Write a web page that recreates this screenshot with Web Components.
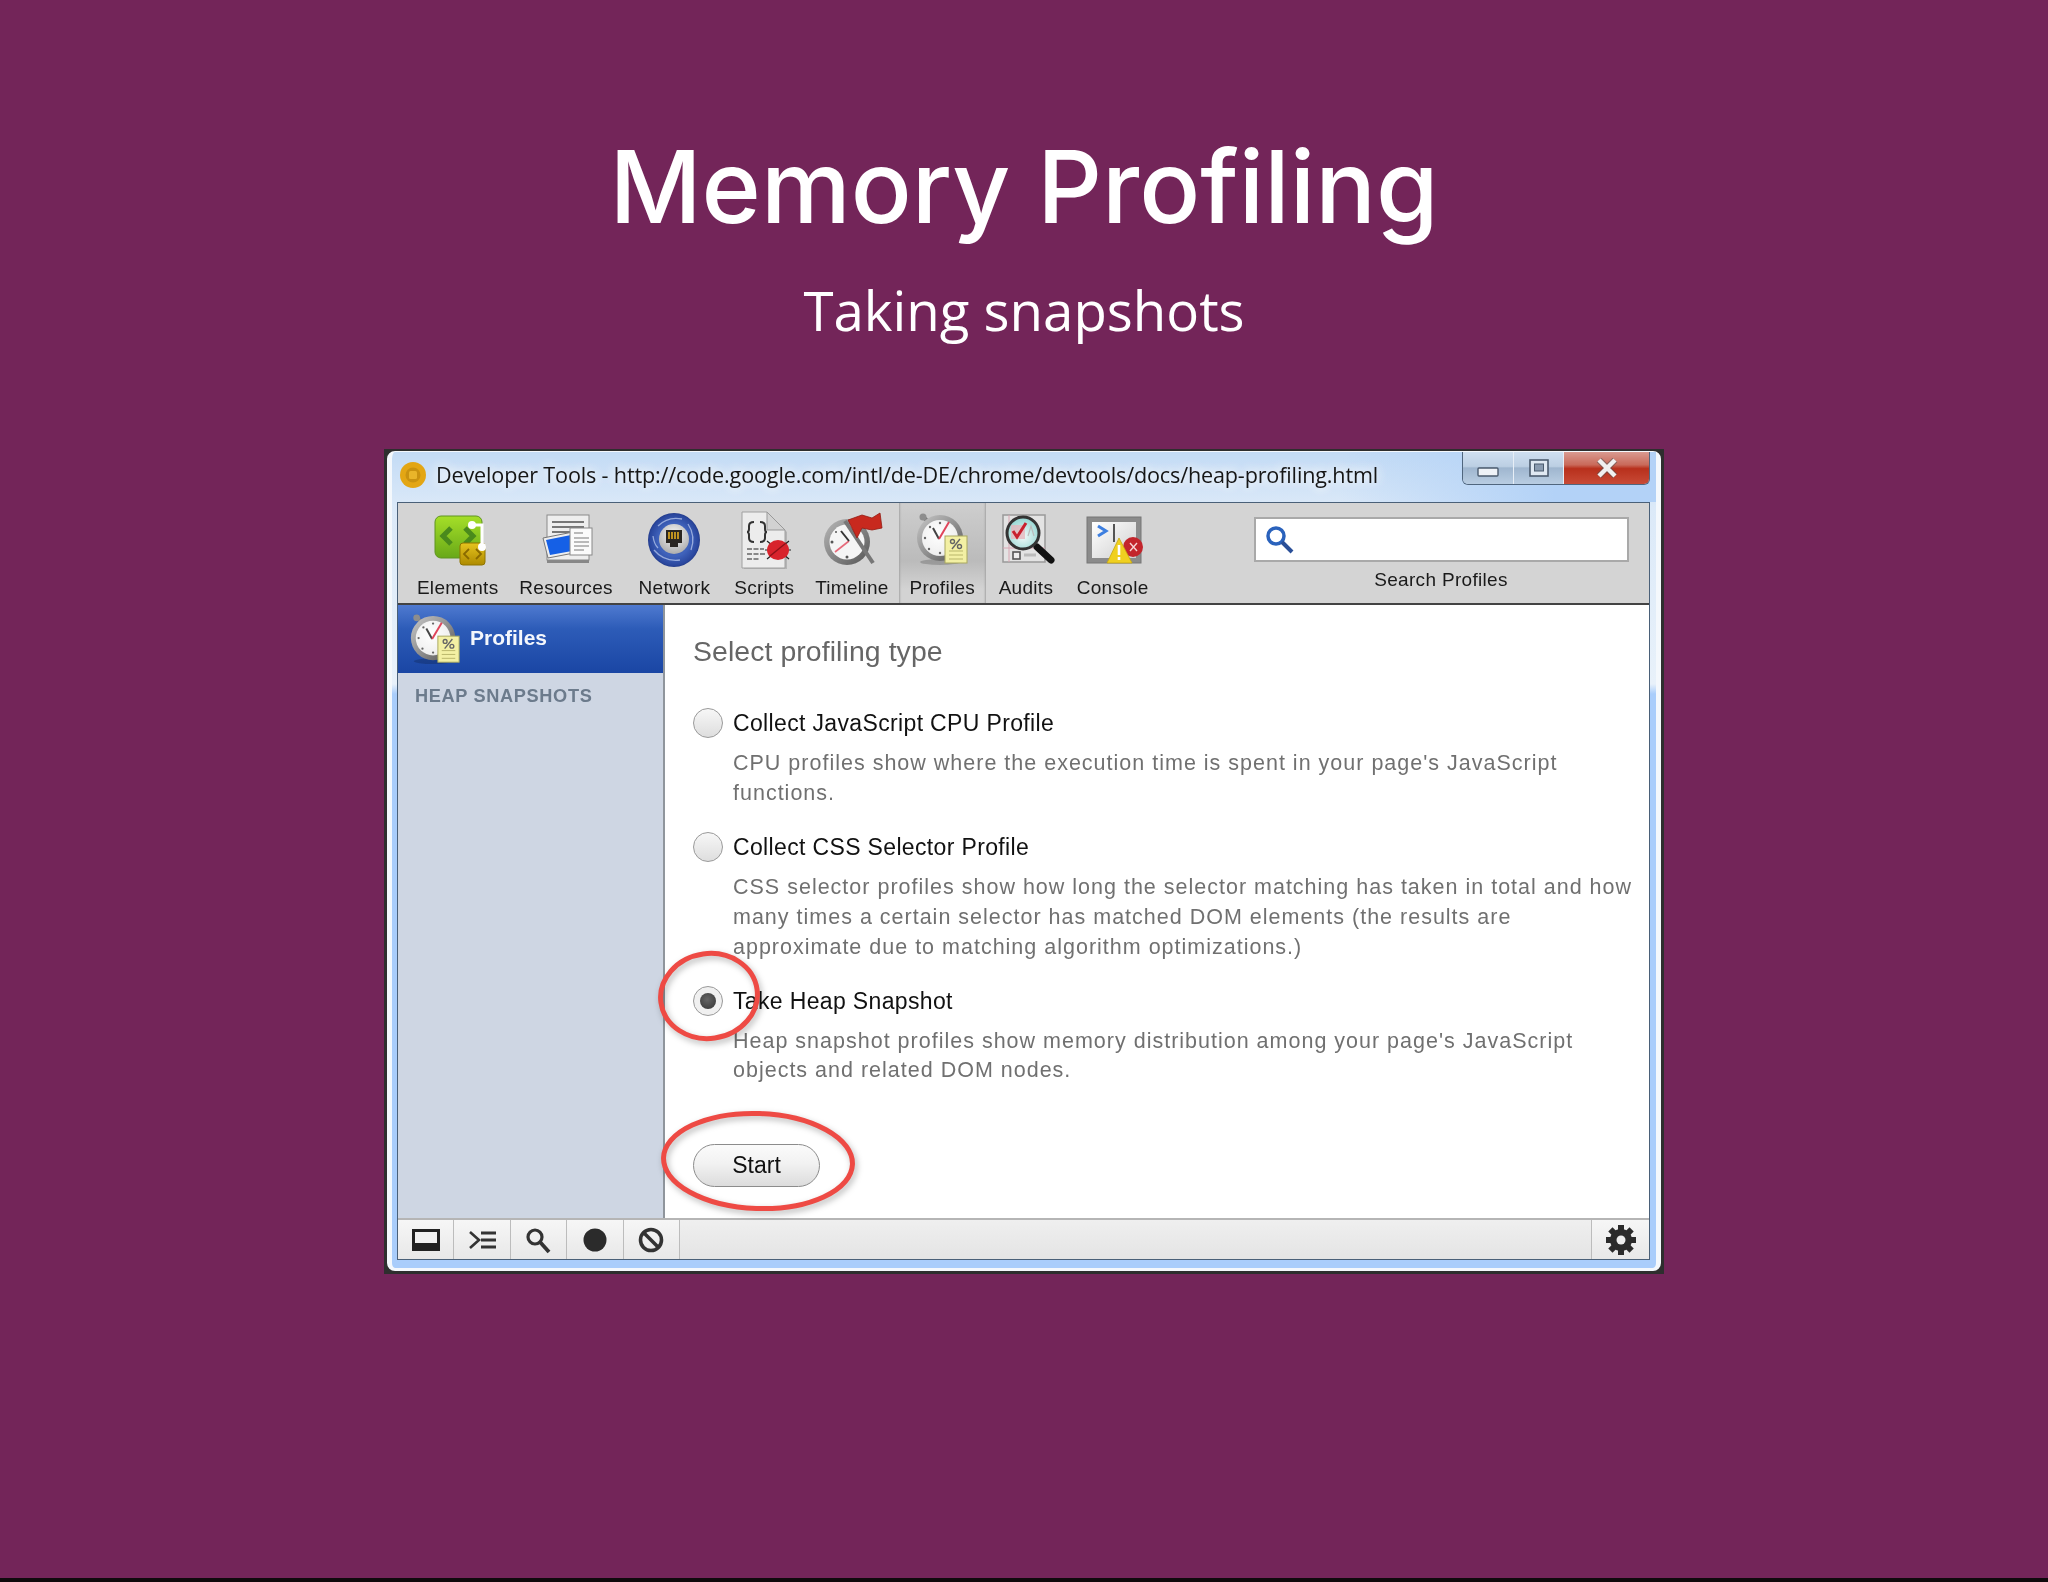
<!DOCTYPE html>
<html>
<head>
<meta charset="utf-8">
<title>Memory Profiling</title>
<style>
    html, body { margin: 0; padding: 0; background: #732559; }
</style>
</head>
<body>
<deck-slide>
    <span slot="title">Memory Profiling</span>
    <span slot="subtitle">Taking snapshots</span>
    <dt-window>
        <span slot="caption">Developer Tools - http://code.google.com/intl/de-DE/chrome/devtools/docs/heap-profiling.html</span>

        <dt-tool slot="tools" icon="elements">Elements</dt-tool>
        <dt-tool slot="tools" icon="resources">Resources</dt-tool>
        <dt-tool slot="tools" icon="network" style="margin-left: 5px">Network</dt-tool>
        <dt-tool slot="tools" icon="scripts" style="margin-left: 3px">Scripts</dt-tool>
        <dt-tool slot="tools" icon="timeline">Timeline</dt-tool>
        <dt-tool slot="tools" icon="profiles" selected>Profiles</dt-tool>
        <dt-tool slot="tools" icon="audits">Audits</dt-tool>
        <dt-tool slot="tools" icon="console">Console</dt-tool>

        <dt-sidebar slot="sidebar"></dt-sidebar>

        <profile-panel slot="panel">
            <profile-option>
                <span slot="label">Collect JavaScript CPU Profile</span>
                CPU profiles show where the execution time is spent in your page's JavaScript<br>functions.
            </profile-option>
            <profile-option>
                <span slot="label">Collect CSS Selector Profile</span>
                CSS selector profiles show how long the selector matching has taken in total and how<br>many times a certain selector has matched DOM elements (the results are<br>approximate due to matching algorithm optimizations.)
            </profile-option>
            <profile-option checked>
                <span slot="label">Take Heap Snapshot</span>
                Heap snapshot profiles show memory distribution among your page's JavaScript<br>objects and related DOM nodes.
            </profile-option>
        </profile-panel>

        <dt-status slot="status"></dt-status>
    </dt-window>
</deck-slide>

<script>
// --- icons ---------------------------------------------------------------
const stopwatch = /* html */`
    <defs>
        <linearGradient id="ring" x1="0" y1="0" x2="1" y2="1"><stop offset="0" stop-color="#c9c9c9"/><stop offset=".55" stop-color="#8b8b8b"/><stop offset="1" stop-color="#4f4f4f"/></linearGradient>
        <radialGradient id="face" cx=".45" cy=".4" r=".7"><stop offset="0" stop-color="#ffffff"/><stop offset=".8" stop-color="#efefef"/><stop offset="1" stop-color="#bdbdbd"/></radialGradient>
    </defs>
    <path d="M11 5 L18 11" stroke="#777" stroke-width="4"/>
    <circle cx="11" cy="5" r="3.5" fill="#8d8d8d"/>
    <ellipse cx="28" cy="50" rx="20" ry="3" fill="#000" opacity=".18"/>
    <circle cx="28" cy="26" r="23" fill="url(#ring)"/>
    <circle cx="28" cy="26" r="18" fill="url(#face)"/>
    <g fill="#666"><circle cx="28" cy="11" r="1.2"/><circle cx="13" cy="26" r="1.2"/><circle cx="18" cy="15" r="1.2"/><circle cx="17" cy="37" r="1.2"/><circle cx="28" cy="41" r="1.2"/></g>
    <path d="M21 16 L27 27" stroke="#444" stroke-width="2"/>
    <path d="M27 27 L37 10" stroke="#e0455a" stroke-width="2"/>
    <rect x="33" y="24" width="22" height="27" fill="#f3f0a4" stroke="#a9a85e" stroke-width="1"/>
    <path d="M37 39 L51 39 M37 43 L51 43 M37 47 L51 47" stroke="#b9b66a" stroke-width="1"/>
    <g stroke="#666" fill="none" stroke-width="1.4"><path d="M48 27 L40 37"/><circle cx="40.5" cy="29.5" r="2"/><circle cx="47.5" cy="34.5" r="2"/></g>`;

const ICONS = {
    elements: /* html */`
        <defs>
            <linearGradient id="g" x1="0" y1="0" x2="0" y2="1"><stop offset="0" stop-color="#a5df28"/><stop offset="1" stop-color="#68a818"/></linearGradient>
            <linearGradient id="y" x1="0" y1="0" x2="0" y2="1"><stop offset="0" stop-color="#e6c41e"/><stop offset="1" stop-color="#ae8a00"/></linearGradient>
        </defs>
        <rect x="7" y="4" width="47" height="42" rx="6" fill="url(#g)" stroke="#5f9420"/>
        <path d="M23 16 L15 24 L23 32 M37 16 L45 24 L37 32" fill="none" stroke="#4a8a1c" stroke-width="5"/>
        <rect x="32" y="31" width="25" height="22" rx="3" fill="url(#y)" stroke="#8f7400"/>
        <path d="M41 37 L36 42 L41 47 M48 37 L53 42 L48 47" fill="none" stroke="#8a6a00" stroke-width="1.8"/>
        <path d="M44 13 L54 13 L54 35" fill="none" stroke="#fff" stroke-width="3"/>
        <circle cx="44" cy="13" r="4" fill="#fff"/><circle cx="54" cy="35" r="4" fill="#fff"/>`,
    resources: /* html */`
        <rect x="11" y="46" width="42" height="5" fill="#666" opacity=".7"/>
        <rect x="11" y="3" width="42" height="45" fill="#eeeeee" stroke="#8a8a8a"/>
        <path d="M16 10 L48 10 M16 15 L48 15 M16 20 L36 20" stroke="#777" stroke-width="1.8"/>
        <path d="M7 26 L37 20 L38 41 L12 46 Z" fill="#eee" stroke="#777"/>
        <path d="M10 28 L35 23 L36 39 L14 43 Z" fill="#1560e6"/>
        <rect x="34" y="16" width="22" height="27" fill="#fbfbfb" stroke="#888"/>
        <path d="M38 21 L47 21 M38 26 L53 26 M38 30 L53 30 M38 34 L53 34 M38 38 L48 38" stroke="#7a7a7a" stroke-width="1.2"/>`,
    network: /* html */`
        <defs>
            <radialGradient id="n" cx=".5" cy=".5" r=".55"><stop offset=".55" stop-color="#3f62bb"/><stop offset=".85" stop-color="#2a479e"/><stop offset="1" stop-color="#182a6e"/></radialGradient>
            <radialGradient id="s" cx=".5" cy=".35" r=".7"><stop offset="0" stop-color="#f7f7f7"/><stop offset="1" stop-color="#a8a8a8"/></radialGradient>
        </defs>
        <ellipse cx="30" cy="28" rx="26" ry="27" fill="url(#n)"/>
        <path d="M10 38 Q20 50 36 48 M44 12 Q52 24 47 38 M14 14 Q24 4 38 7 M9 24 Q10 32 14 36" fill="none" stroke="#aebfe8" stroke-width="1.3" opacity=".8"/>
        <circle cx="30" cy="27" r="15" fill="url(#s)"/>
        <path d="M22 18 H38 V31 H34 V35 H26 V31 H22 Z" fill="#2a2622"/>
        <path d="M25 20 V27 M28 20 V27 M31 20 V27 M34 20 V27" stroke="#d9a520" stroke-width="1.7"/>`,
    scripts: /* html */`
        <path d="M10 2 H35 L53 20 V57 H10 Z" fill="#000" opacity=".15"/>
        <path d="M8 0 H33 L51 18 V56 H8 Z" fill="#ececec" stroke="#a0a0a0"/>
        <path d="M33 0 V18 H51 Z" fill="#d2d2d2" stroke="#999"/>
        <path d="M20 10 Q15 10 15 14 V17 Q15 20 13 20 Q15 20 15 23 V26 Q15 30 20 30 M26 10 Q31 10 31 14 V17 Q31 20 33 20 Q31 20 31 23 V26 Q31 30 26 30" fill="none" stroke="#333" stroke-width="2"/>
        <path d="M13 37 L30 37 M13 42 L32 42 M13 47 L26 47" stroke="#666" stroke-width="1.6" stroke-dasharray="5 1.5"/>
        <path d="M33 29 L55 47 M55 29 L33 47 M31 38 H57" stroke="#222" stroke-width="1.2"/>
        <ellipse cx="44" cy="38" rx="11" ry="10" fill="#d8232c"/>
        <path d="M36 44 L52 31" stroke="#8c1218" stroke-width="1.4"/>`,
    timeline: /* html */`
        <defs>
            <linearGradient id="ring" x1="0" y1="0" x2="1" y2="1"><stop offset="0" stop-color="#b8b8b8"/><stop offset="1" stop-color="#555"/></linearGradient>
        </defs>
        <circle cx="25" cy="30" r="23" fill="url(#ring)"/>
        <circle cx="25" cy="30" r="17.5" fill="#f5f5f5"/>
        <g fill="#555"><circle cx="10" cy="30" r="1.5"/><circle cx="25" cy="45" r="1.5"/><circle cx="14" cy="20" r="1"/></g>
        <path d="M13 40 L27 29" stroke="#e66a7a" stroke-width="1.6"/>
        <path d="M27 29 L19 19" stroke="#333" stroke-width="2"/>
        <path d="M23 9 L51 51" stroke="#777" stroke-width="4"/>
        <path d="M26 8 L40 3 L50 6 L58 1 L60 16 L50 18 L40 16 L35 26 Z" fill="#c8291e" stroke="#931a12" stroke-width=".8"/>`,
    profiles: stopwatch,
    audits: /* html */`
        <defs>
            <radialGradient id="l" cx=".5" cy=".6" r=".6"><stop offset="0" stop-color="#f3fbfa"/><stop offset="1" stop-color="#8fd4d0"/></radialGradient>
        </defs>
        <rect x="7" y="3" width="42" height="47" fill="#e3e3e3" stroke="#999" stroke-width="1.5"/>
        <path d="M7 36 H49 M13 3 V50" stroke="#d9a6b3" stroke-width="1"/>
        <rect x="17" y="40" width="7" height="7" fill="#eee" stroke="#555" stroke-width="1.6"/>
        <path d="M28 43 H40" stroke="#bbb" stroke-width="3"/>
        <path d="M41 35 L55 48" stroke="#111" stroke-width="7" stroke-linecap="round"/>
        <circle cx="27" cy="21" r="16" fill="url(#l)" stroke="#333" stroke-width="3"/>
        <rect x="15" y="13" width="14" height="14" fill="#e5b6bd" opacity=".8"/>
        <path d="M17 19 L21 25 L30 11" fill="none" stroke="#c8202e" stroke-width="3"/>
        <path d="M32 24 L35 14 L38 24" fill="none" stroke="#bbb" stroke-width="1.2"/>`,
    console: /* html */`
        <defs>
            <linearGradient id="w" x1="0" y1="0" x2="1" y2="1"><stop offset="0" stop-color="#fff"/><stop offset="1" stop-color="#cfcfcf"/></linearGradient>
        </defs>
        <rect x="4" y="5" width="54" height="46" fill="#8b8b8b" stroke="#777"/>
        <rect x="9" y="10" width="44" height="36" fill="url(#w)"/>
        <path d="M15 14 L23 19 L15 24" fill="none" stroke="#3d7fe0" stroke-width="3"/>
        <path d="M31 12 V30" stroke="#222" stroke-width="1.5"/>
        <circle cx="50" cy="35" r="10" fill="#c3252c"/>
        <path d="M47 31 L54 39 M54 31 L47 39" stroke="#f6d6d6" stroke-width="1.4"/>
        <path d="M36 26 L49 51 H24 Z" fill="#f0d020" stroke="#c8a810" stroke-width=".8"/>
        <path d="M36 33 V43 M36 45 V48" stroke="#fff" stroke-width="2.6"/>`
};

class DtIcon extends HTMLElement {
    constructor() {
        super();
        this.attachShadow({mode: "open"});
    }

    connectedCallback() {
        this.shadowRoot.innerHTML = /* html */`
        <style>
            :host { display: block; width: var(--icon-w, 60px); height: var(--icon-h, 56px); }
            svg { display: block; width: 100%; height: 100%; overflow: visible; }
        </style>
        <svg viewBox="0 0 60 56" xmlns="http://www.w3.org/2000/svg">${ICONS[this.getAttribute("name")]}</svg>
        `;
    }
}
customElements.define("dt-icon", DtIcon);

// --- slide ---------------------------------------------------------------
class DeckSlide extends HTMLElement {
    constructor() {
        super();
        this.attachShadow({mode: "open"});
    }

    connectedCallback() {
        this.shadowRoot.innerHTML = /* html */`
        <style>
            :host {
                display: flex;
                flex-direction: column;
                align-items: center;
                box-sizing: border-box;
                width: 2048px;
                height: 1582px;
                background: #732559;
                border-bottom: 4px solid #0f0a0c;
                color: #fff;
                overflow: hidden;
            }
            h1 {
                margin: 123px 0 0;
                font: 500 101px/126px Inter, "Open Sans", sans-serif;
            }
            h2 {
                margin: 25px 0 0;
                font: 400 54.6px/73px "Open Sans", sans-serif;
            }
            .win { margin-top: 102px; }
        </style>
        <h1><slot name="title"></slot></h1>
        <h2><slot name="subtitle"></slot></h2>
        <div class="win"><slot></slot></div>
        `;
    }
}
customElements.define("deck-slide", DeckSlide);

// --- window --------------------------------------------------------------
class DtWindow extends HTMLElement {
    constructor() {
        super();
        this.attachShadow({mode: "open"});
    }

    connectedCallback() {
        this.shadowRoot.innerHTML = /* html */`
        <style>
            :host {
                display: block;
                width: 1280px;
                height: 825px;
                box-sizing: border-box;
                padding: 2px 3px 3px 3px;
                background: #2e2e2e;
                font-family: "Liberation Sans", Arial, sans-serif;
                filter: blur(.45px);
            }
            .frame {
                height: 100%;
                box-sizing: border-box;
                display: flex;
                flex-direction: column;
                padding: 0 6px 8px 5px;
                border: solid #f4f8fc;
                border-width: 1px 5px 3px 5px;
                border-radius: 8px;
                background: linear-gradient(180deg, #c3dbf5 0, #dbe9f8 55px, #e8f1fa 232px, #a9cdfb 242px, #a9cdfb 100%);
            }
            .titlebar {
                flex: none;
                height: 50px;
                display: flex;
                align-items: flex-start;
                position: relative;
                background: linear-gradient(90deg, transparent 0, transparent 75%, #b3d2f7 92%);
                margin: 0 -6px 0 -5px;
                padding: 0 6px 0 7px;
            }
            .fav {
                width: 28px;
                height: 28px;
                margin: 9px 0 0 0;
                flex: none;
            }
            .caption {
                margin: 8px 0 0 9px;
                font: 400 21.6px/30px "Open Sans", sans-serif;
                letter-spacing: -.16px;
                color: #161616;
                text-shadow: 0 0 12px #fff, 0 0 12px #fff;
                white-space: nowrap;
            }
            .winbtns {
                position: absolute;
                right: 6px;
                top: 0;
                display: flex;
                height: 33px;
                border: 1px solid #50667e;
                border-top: 0;
                border-radius: 0 0 6px 6px;
                overflow: hidden;
                box-sizing: border-box;
            }
            .winbtns div { display: flex; align-items: center; justify-content: center; height: 100%; }
            .min, .max { background: linear-gradient(180deg, #cfdff0 0, #bccfe3 45%, #9fb6cf 50%, #b9cde2 100%); }
            .min { width: 50px; border-right: 1px solid #e7eef6; }
            .min svg { margin-top: 8px; }
            .max { width: 49px; }
            .close { width: 85px; background: linear-gradient(180deg, #d99a90 0, #c96a5a 40%, #b8301c 52%, #c84a36 100%); border-left: 1px solid #e7eef6; }

            .inner {
                flex: 1;
                min-height: 0;
                display: flex;
                flex-direction: column;
                border: 1px solid #4a6078;
                position: relative;
            }
            .toolbar {
                flex: none;
                height: 100px;
                display: flex;
                padding-left: 8.5px;
                padding-right: 20.5px;
                background: #d4d4d4;
                border-bottom: 2px solid #434343;
            }
            .search {
                margin-left: auto;
                width: 375px;
                padding-top: 14px;
                box-sizing: border-box;
            }
            .search .box {
                height: 45px;
                box-sizing: border-box;
                background: #fff;
                border: 2px solid #a9a9a9;
                display: flex;
                align-items: center;
                padding-left: 9px;
            }
            .search .label {
                margin-top: 6px;
                text-align: center;
                font-size: 19px;
                line-height: 24px;
                letter-spacing: .32px;
                color: #1a1a1a;
            }
            .body {
                flex: 1;
                min-height: 0;
                display: flex;
                background: #fff;
                position: relative;
            }
            .side { flex: none; width: 264.5px; border-right: 2px solid #8f959c; background: #ced6e3; }
            .panel { flex: 1; min-width: 0; }
            .status { flex: none; }
        </style>
        <div class="frame">
            <div class="titlebar">
                <svg class="fav" viewBox="0 0 28 28">
                    <circle cx="14" cy="14" r="13" fill="#e3a614"/>
                    <circle cx="14" cy="14" r="7.5" fill="#c99210"/>
                    <rect x="10" y="10" width="8" height="8" rx="1.5" fill="#e9b52a"/>
                </svg>
                <div class="caption"><slot name="caption"></slot></div>
                <div class="winbtns">
                    <div class="min"><svg width="22" height="10"><rect x="1" y="1" width="20" height="8" rx="1" fill="#eef2f7" stroke="#4b5b6e" stroke-width="1.4"/></svg></div>
                    <div class="max"><svg width="20" height="18"><rect x="1" y="1" width="18" height="16" fill="#dfe8f2" stroke="#4b5b6e" stroke-width="1.6"/><rect x="5.5" y="5" width="9" height="7" fill="#8a9bb0" stroke="#4b5b6e"/></svg></div>
                    <div class="close"><svg width="22" height="20"><path d="M3 2 L19 18 M19 2 L3 18" stroke="#555" stroke-width="6.5" opacity=".55"/><path d="M3 2 L19 18 M19 2 L3 18" stroke="#f0f0f0" stroke-width="4.4"/></svg></div>
                </div>
            </div>
            <div class="inner">
                <div class="toolbar">
                    <slot name="tools"></slot>
                    <div class="search">
                        <div class="box">
                            <svg width="30" height="30" viewBox="0 0 30 30">
                                <circle cx="11" cy="11" r="8" fill="none" stroke="#2a62bc" stroke-width="3.5"/>
                                <path d="M17 17 L27 27" stroke="#2a4f98" stroke-width="4"/>
                            </svg>
                        </div>
                        <div class="label">Search Profiles</div>
                    </div>
                </div>
                <div class="body">
                    <div class="side"><slot name="sidebar"></slot></div>
                    <div class="panel"><slot name="panel"></slot></div>
                </div>
                <div class="status"><slot name="status"></slot></div>
            </div>
        </div>
        `;
    }
}
customElements.define("dt-window", DtWindow);

// --- toolbar button ------------------------------------------------------
class DtTool extends HTMLElement {
    constructor() {
        super();
        this.attachShadow({mode: "open"});
    }

    connectedCallback() {
        this.shadowRoot.innerHTML = /* html */`
        <style>
            :host {
                display: flex;
                flex-direction: column;
                align-items: center;
                padding: 9px 10.4px 0;
                box-sizing: border-box;
                height: 100%;
                font-size: 19px;
                line-height: 24px;
                letter-spacing: .3px;
                color: #1a1a1a;
            }
            :host([selected]) {
                background: linear-gradient(180deg, #cecece 0, #bbbbbb 58%, #d3d3d3 86%);
                box-shadow: inset 2px 0 2px -1px #a5a5a5, inset -2px 0 2px -1px #a5a5a5;
            }
            .label { margin-top: 8px; white-space: nowrap; }
        </style>
        <dt-icon name="${this.getAttribute("icon")}"></dt-icon>
        <div class="label"><slot></slot></div>
        `;
    }
}
customElements.define("dt-tool", DtTool);

// --- sidebar -------------------------------------------------------------
class DtSidebar extends HTMLElement {
    constructor() {
        super();
        this.attachShadow({mode: "open"});
    }

    connectedCallback() {
        this.shadowRoot.innerHTML = /* html */`
        <style>
            :host { display: block; }
            .head {
                height: 68px;
                display: flex;
                align-items: center;
                gap: 6px;
                padding-left: 8px;
                background: linear-gradient(180deg, #4f7ad0 0, #2d5cb8 35%, #1a46a4 100%);
                color: #f4f7fc;
                font-size: 21px;
                font-weight: 700;
            }
            .head span { position: relative; top: -1px; }
            dt-icon { --icon-w: 58px; --icon-h: 54px; flex: none; margin-top: 2px; }
            .section {
                margin: 10px 0 0 17px;
                font-size: 18.2px;
                line-height: 26px;
                font-weight: 700;
                letter-spacing: .64px;
                color: #6c7b8c;
                white-space: nowrap;
            }
        </style>
        <div class="head">
            <dt-icon name="profiles"></dt-icon>
            <span>Profiles</span>
        </div>
        <div class="section">HEAP SNAPSHOTS</div>
        `;
    }
}
customElements.define("dt-sidebar", DtSidebar);

// --- main panel ----------------------------------------------------------
class ProfilePanel extends HTMLElement {
    constructor() {
        super();
        this.attachShadow({mode: "open"});
    }

    connectedCallback() {
        this.shadowRoot.innerHTML = /* html */`
        <style>
            :host {
                display: block;
                position: relative;
                height: 100%;
                box-sizing: border-box;
                padding: 28px 0 0 28.5px;
            }
            h3 {
                margin: 0 0 39px;
                font-size: 28.4px;
                line-height: 36px;
                font-weight: 400;
                color: #666;
                letter-spacing: .09px;
            }
            .options { display: flex; flex-direction: column; gap: 23px; }
            ::slotted(profile-option:first-child) { margin-bottom: 1px; }
            button {
                display: block;
                margin-top: 58px;
                width: 127px;
                height: 43px;
                padding: 0;
                border: 1px solid #8c8c8c;
                border-radius: 22px;
                background: linear-gradient(180deg, #fbfbfb 0, #f2f2f2 45%, #dcdcdc 100%);
                font: 400 23px/1 "Liberation Sans", Arial, sans-serif;
                color: #111;
            }
            svg {
                position: absolute;
                left: 0;
                top: 0;
                width: 300px;
                height: 620px;
                overflow: visible;
                pointer-events: none;
                filter: drop-shadow(2px 3px 3px rgba(0, 0, 0, .28));
            }
        </style>
        <h3>Select profiling type</h3>
        <div class="options"><slot></slot></div>
        <button>Start</button>
        <svg viewBox="0 0 300 620">
            <ellipse cx="44" cy="391" rx="48.5" ry="42.5" fill="none" stroke="#ee4a44" stroke-width="5" transform="rotate(-8 44 391)"/>
            <ellipse cx="93" cy="556" rx="94.5" ry="47.5" fill="none" stroke="#ee4a44" stroke-width="5" transform="rotate(2 93 556)"/>
        </svg>
        `;
    }
}
customElements.define("profile-panel", ProfilePanel);

class ProfileOption extends HTMLElement {
    constructor() {
        super();
        this.attachShadow({mode: "open"});
    }

    connectedCallback() {
        this.shadowRoot.innerHTML = /* html */`
        <style>
            :host {
                display: grid;
                grid-template-columns: 30px 1fr;
                column-gap: 10px;
                align-items: center;
            }
            .radio {
                width: 30px;
                height: 30px;
                box-sizing: border-box;
                border: 1.5px solid #9a9a9a;
                border-radius: 50%;
                background: linear-gradient(180deg, #f7f7f7, #dedede);
                display: flex;
                align-items: center;
                justify-content: center;
            }
            :host([checked]) .radio { background: #f0f0f0; }
            :host([checked]) .radio::after {
                content: "";
                width: 16px;
                height: 16px;
                border-radius: 50%;
                background: radial-gradient(circle at 45% 40%, #666, #333);
            }
            .label {
                font-size: 23px;
                line-height: 30px;
                letter-spacing: .35px;
                color: #111;
                white-space: nowrap;
            }
            .desc {
                grid-column: 2;
                margin-top: 11px;
                font-size: 21.5px;
                line-height: 29.7px;
                letter-spacing: 1px;
                color: #707070;
                white-space: nowrap;
            }
        </style>
        <div class="radio"></div>
        <div class="label"><slot name="label"></slot></div>
        <div class="desc"><slot></slot></div>
        `;
    }
}
customElements.define("profile-option", ProfileOption);

// --- status bar ----------------------------------------------------------
class DtStatus extends HTMLElement {
    constructor() {
        super();
        this.attachShadow({mode: "open"});
    }

    connectedCallback() {
        let teeth = "";
        for (let a = 0; a < 360; a += 45) {
            teeth += `<rect x="12" y="0" width="6" height="7" transform="rotate(${a} 15 15)"/>`;
        }
        this.shadowRoot.innerHTML = /* html */`
        <style>
            :host {
                display: flex;
                height: 41px;
                box-sizing: border-box;
                border-top: 2px solid #b5b5b5;
                background: linear-gradient(180deg, #efefef, #e4e4e4);
            }
            .btn {
                flex: none;
                width: 56.4px;
                box-sizing: border-box;
                border-right: 1.5px solid #bcbcbc;
                background: linear-gradient(180deg, #f6f6f6, #e8e8e8);
                display: flex;
                align-items: center;
                justify-content: center;
            }
            .gear { margin-left: auto; width: 58px; border-right: 0; border-left: 1.5px solid #bcbcbc; }
        </style>
        <div class="btn">
            <svg width="30" height="24"><rect x="1" y="1" width="28" height="22" fill="#222"/><rect x="4" y="4" width="22" height="11" fill="#f2f2f2"/></svg>
        </div>
        <div class="btn">
            <svg width="30" height="24"><path d="M3 4 L12 12 L3 20" fill="none" stroke="#333" stroke-width="2.6"/><path d="M14 5 H29 M14 12 H29 M14 19 H29" stroke="#333" stroke-width="3"/></svg>
        </div>
        <div class="btn">
            <svg width="30" height="28"><circle cx="12" cy="11" r="7" fill="none" stroke="#333" stroke-width="3.2"/><path d="M17 16 L26 26" stroke="#333" stroke-width="3.8"/></svg>
        </div>
        <div class="btn">
            <svg width="26" height="26"><circle cx="13" cy="13" r="11.5" fill="#2b2b2b"/></svg>
        </div>
        <div class="btn">
            <svg width="28" height="28"><circle cx="14" cy="14" r="10.5" fill="none" stroke="#333" stroke-width="3.6"/><path d="M7 7 L21 21" stroke="#333" stroke-width="3.6"/></svg>
        </div>
        <div class="btn gear">
            <svg width="30" height="30" fill="#2b2b2b">
                ${teeth}
                <circle cx="15" cy="15" r="11"/>
                <circle cx="15" cy="15" r="4.5" fill="#eee"/>
            </svg>
        </div>
        `;
    }
}
customElements.define("dt-status", DtStatus);
</script>
</body>
</html>
